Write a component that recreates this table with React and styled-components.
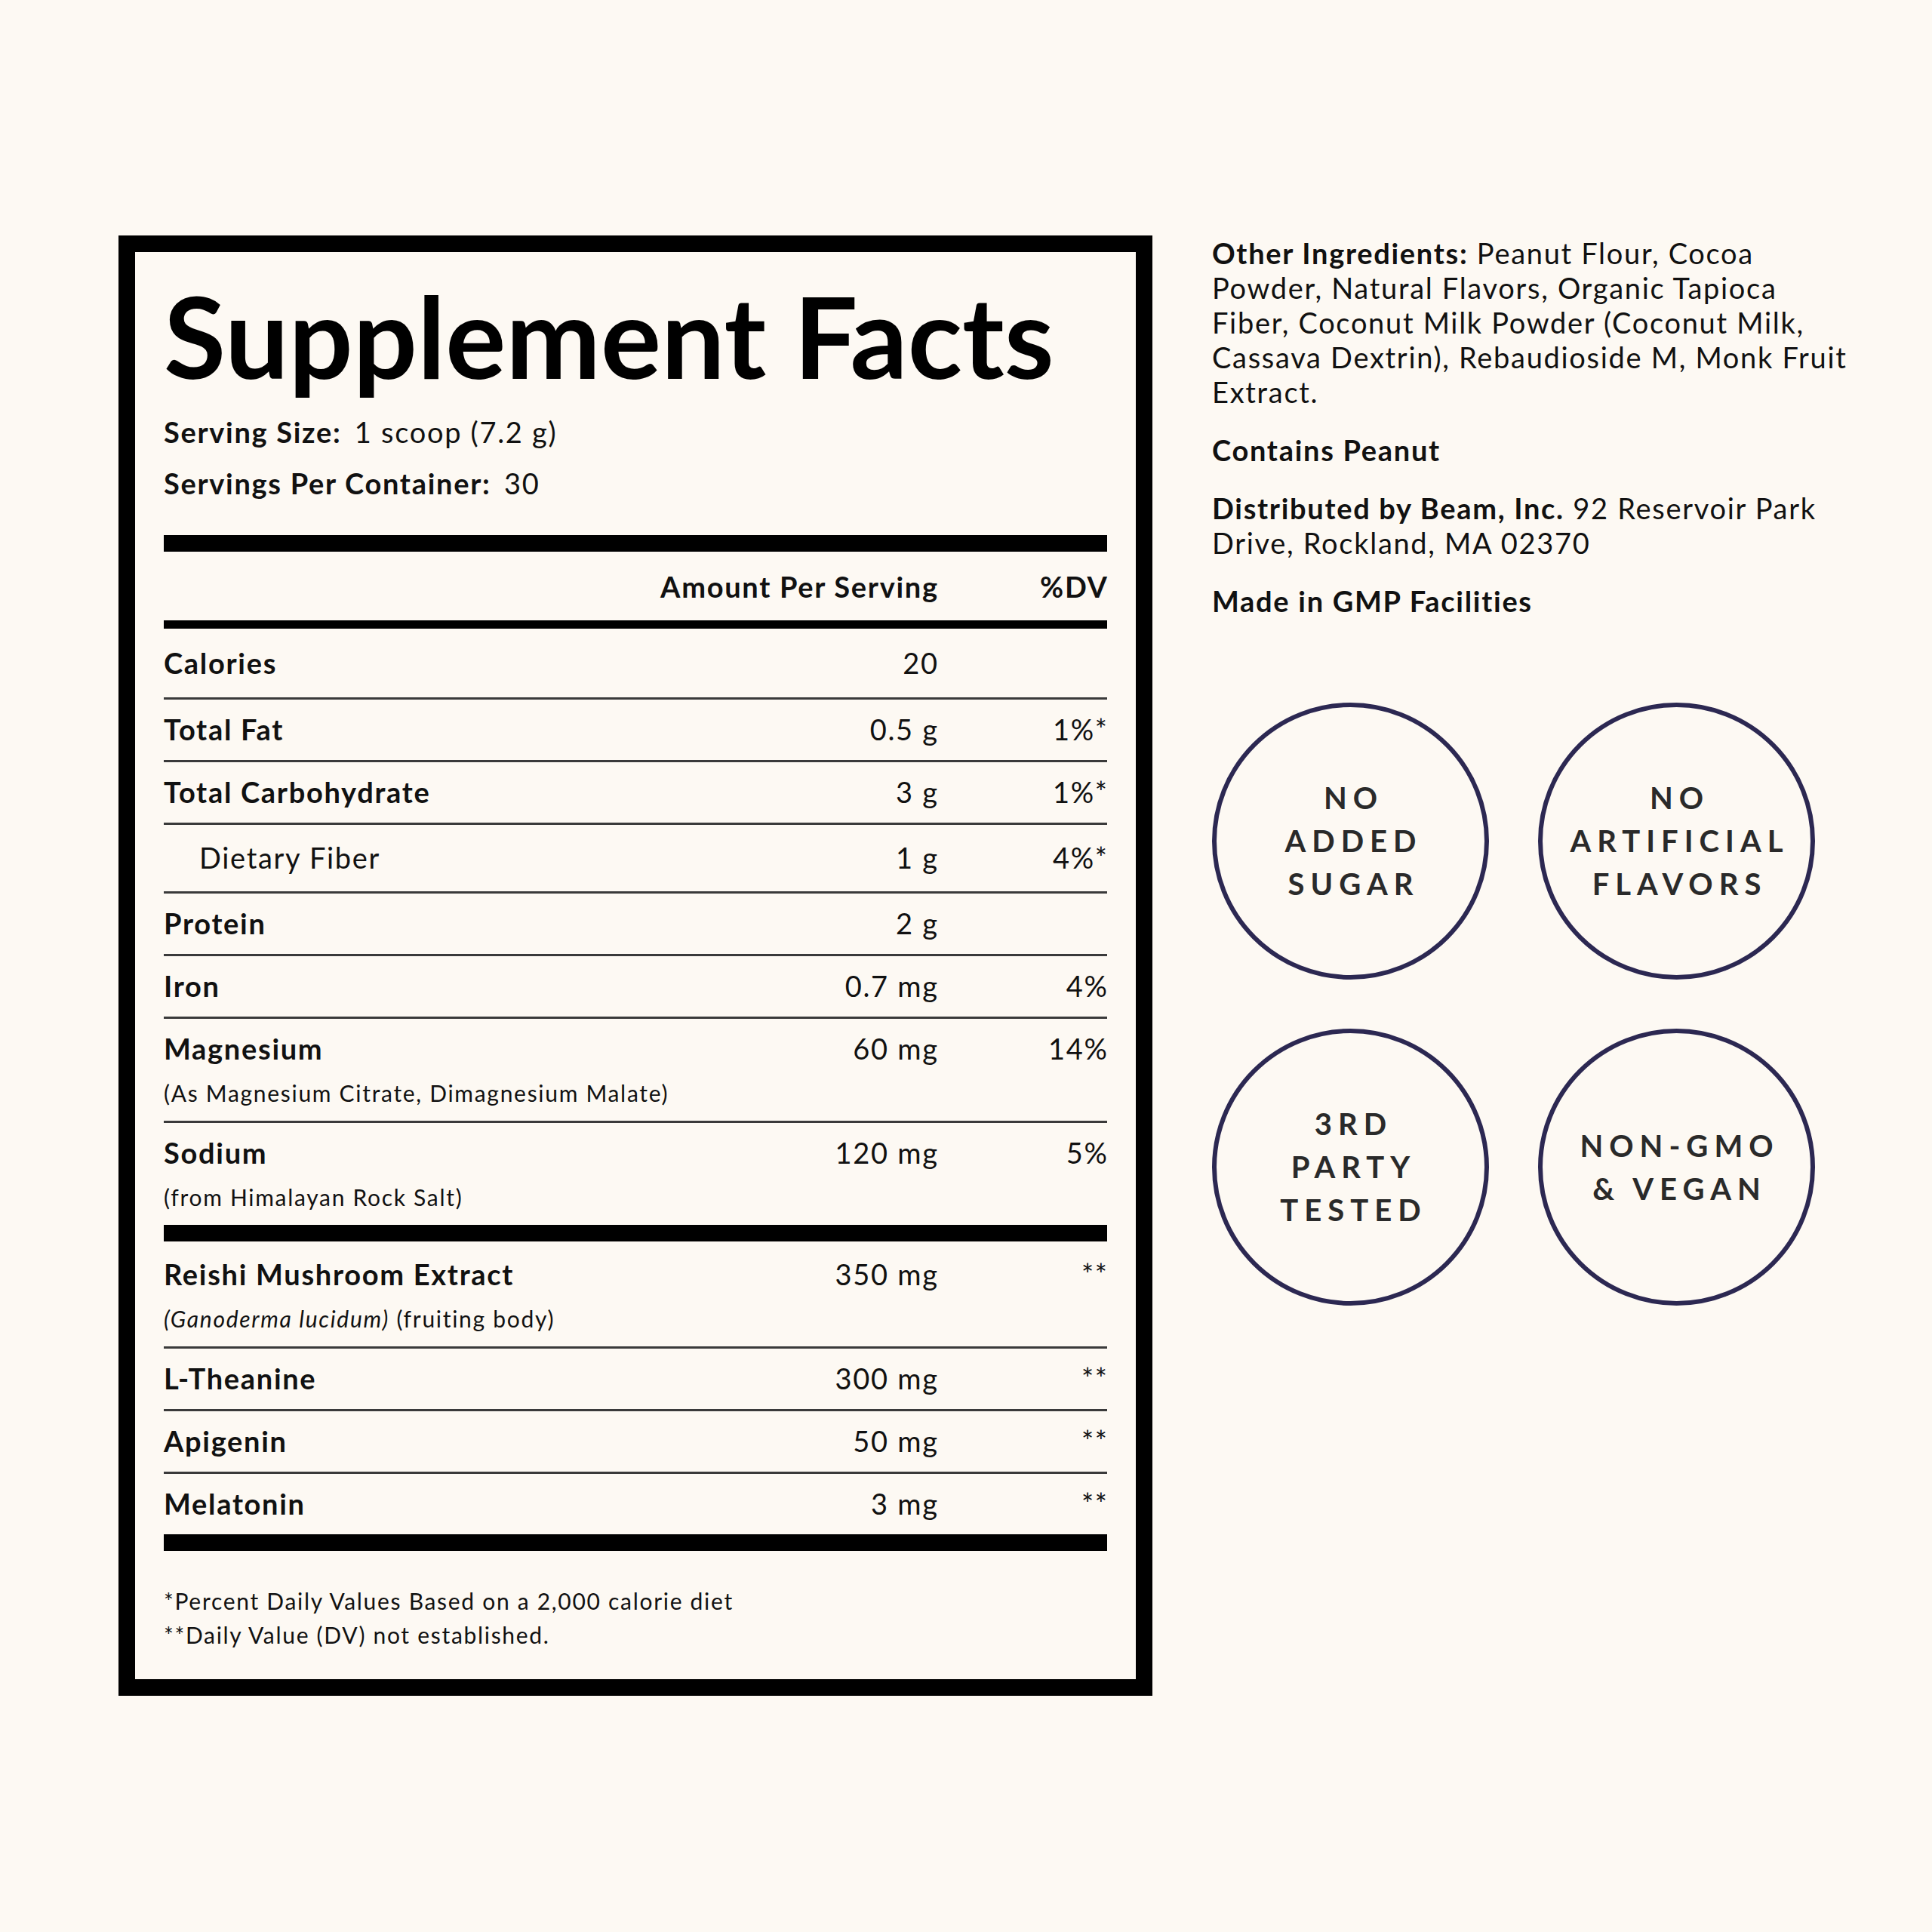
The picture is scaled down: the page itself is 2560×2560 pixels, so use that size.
import React from 'react'
import styled, { createGlobalStyle } from 'styled-components'

const rows = [
  { label: 'Calories', amount: '20', dv: '', top: 22, bottom: 23 },
  { label: 'Total Fat', amount: '0.5 g', dv: '1%*' },
  { label: 'Total Carbohydrate', amount: '3 g', dv: '1%*' },
  { label: 'Dietary Fiber', amount: '1 g', dv: '4%*', indent: true, top: 20, bottom: 22 },
  { label: 'Protein', amount: '2 g', dv: '' },
  { label: 'Iron', amount: '0.7 mg', dv: '4%' },
  { label: 'Magnesium', amount: '60 mg', dv: '14%', sub: '(As Magnesium Citrate, Dimagnesium Malate)' },
  { label: 'Sodium', amount: '120 mg', dv: '5%', sub: '(from Himalayan Rock Salt)' },
]

const extras = [
  { label: 'Reishi Mushroom Extract', amount: '350 mg', dv: '**', top: 20, sub: <><i>(Ganoderma lucidum)</i> (fruiting body)</> },
  { label: 'L-Theanine', amount: '300 mg', dv: '**' },
  { label: 'Apigenin', amount: '50 mg', dv: '**' },
  { label: 'Melatonin', amount: '3 mg', dv: '**' },
]

const badges = [
  ['NO', 'ADDED', 'SUGAR'],
  ['NO', 'ARTIFICIAL', 'FLAVORS'],
  ['3RD', 'PARTY', 'TESTED'],
  ['NON-GMO', '& VEGAN'],
]

const FactRow = ({ row }) => (
  <Row $top={row.top} $bottom={row.bottom}>
    <Label $indent={row.indent}>{row.label}</Label>
    <Amount>{row.amount}</Amount>
    <Dv>{row.dv}</Dv>
    {row.sub && <SubLabel>{row.sub}</SubLabel>}
  </Row>
)

const App = () => {
  return (
    <Page>
      <GlobalStyle />
      <FactsPanel>
        <Title>Supplement Facts</Title>
        <ServingLine><Strong $gap>Serving Size:</Strong> 1 scoop (7.2 g)</ServingLine>
        <ServingLine $gap><Strong $gap>Servings Per Container:</Strong> 30</ServingLine>

        <Bar $size={22} $top={46} />
        <HeadRow>
          <span />
          <Amount $bold>Amount Per Serving</Amount>
          <Dv $bold>%DV</Dv>
        </HeadRow>
        <Bar $size={11} />

        {rows.map(r => <FactRow key={r.label} row={r} />)}
        <Bar $size={22} />
        {extras.map(r => <FactRow key={r.label} row={r} />)}
        <Bar $size={22} />

        <Footnotes>
          <div>*Percent Daily Values Based on a 2,000 calorie diet</div>
          <div>**Daily Value (DV) not established.</div>
        </Footnotes>
      </FactsPanel>

      <SideColumn>
        <Para>
          <Strong>Other Ingredients:</Strong> Peanut Flour, Cocoa<br />
          Powder, Natural Flavors, Organic Tapioca<br />
          Fiber, Coconut Milk Powder (Coconut Milk,<br />
          Cassava Dextrin), Rebaudioside M, Monk Fruit<br />
          Extract.
        </Para>
        <Para><Strong>Contains Peanut</Strong></Para>
        <Para>
          <Strong>Distributed by Beam, Inc.</Strong> 92 Reservoir Park<br />
          Drive, Rockland, MA 02370
        </Para>
        <Para><Strong>Made in GMP Facilities</Strong></Para>

        <BadgeGrid>
          {badges.map(lines => (
            <Badge key={lines.join('')}>
              <BadgeText>
                {lines.map(l => <div key={l}>{l}</div>)}
              </BadgeText>
            </Badge>
          ))}
        </BadgeGrid>
      </SideColumn>
    </Page>
  )
}

const GlobalStyle = createGlobalStyle`
body{
    margin: 0;
    background: #fdf9f3;
    font-family: "Lato", "Open Sans", sans-serif;
    color: #111;
}
`
const Page = styled.div`
display: flex;
align-items: flex-start;
gap: 79px;
width: 2560px;
height: 2560px;
box-sizing: border-box;
padding: 312px 0 0 157px;
background: #fdf9f3;
`
const FactsPanel = styled.div`
display: flex;
flex-direction: column;
width: 1370px;
box-sizing: border-box;
border: 22px solid #000;
padding: 36px 38px 36px;
letter-spacing: 1.7px;
`
const Title = styled.h1`
margin: 0;
font-size: 150px;
line-height: 148px;
font-weight: 700;
letter-spacing: 0;
color: #000;
`
const ServingLine = styled.div`
margin-top: ${props => props.$gap ? 22 : 31}px;
font-size: 38px;
line-height: 46px;
`
const Strong = styled.b`
font-weight: 700;
margin-right: ${props => props.$gap ? 6 : 0}px;
`
const Bar = styled.div`
height: ${props => props.$size}px;
margin-top: ${props => props.$top || 0}px;
background: #000;
`
const grid = `
display: grid;
grid-template-columns: 1fr 400px 225px;
align-items: baseline;
`
const HeadRow = styled.div`
${grid}
padding: 23px 0 22px;
font-size: 38px;
line-height: 46px;
`
const Row = styled.div`
${grid}
padding: ${props => props.$top || 16}px 0 ${props => props.$bottom || 18}px;
font-size: 38px;
line-height: 46px;
& + & {
    border-top: 3px solid #3a3a3a;
}
`
const Label = styled.div`
font-weight: ${props => props.$indent ? 400 : 700};
padding-left: ${props => props.$indent ? 47 : 0}px;
`
const Amount = styled.div`
text-align: right;
margin-right: -1.7px;
font-weight: ${props => props.$bold ? 700 : 400};
`
const Dv = styled.div`
text-align: right;
margin-right: -1.7px;
font-weight: ${props => props.$bold ? 700 : 400};
`
const SubLabel = styled.div`
grid-column: 1 / -1;
margin-top: 17px;
font-size: 30px;
line-height: 38px;
`
const Footnotes = styled.div`
margin-top: 44px;
font-size: 30px;
line-height: 45px;
`
const SideColumn = styled.div`
display: flex;
flex-direction: column;
width: 900px;
letter-spacing: 1.7px;
`
const Para = styled.p`
margin: 0 0 31px;
font-size: 38px;
line-height: 46px;
color: #111;
`
const BadgeGrid = styled.div`
display: grid;
grid-template-columns: repeat(2, 367px);
gap: 65px;
margin-top: 81px;
`
const Badge = styled.div`
display: flex;
align-items: center;
justify-content: center;
width: 367px;
height: 367px;
box-sizing: border-box;
border: 6px solid #2c2852;
border-radius: 50%;
`
const BadgeText = styled.div`
font-size: 40px;
line-height: 57px;
font-weight: 700;
letter-spacing: 0.2em;
padding-left: 0.2em;
text-align: center;
color: #2a2a2a;
`
export default App
